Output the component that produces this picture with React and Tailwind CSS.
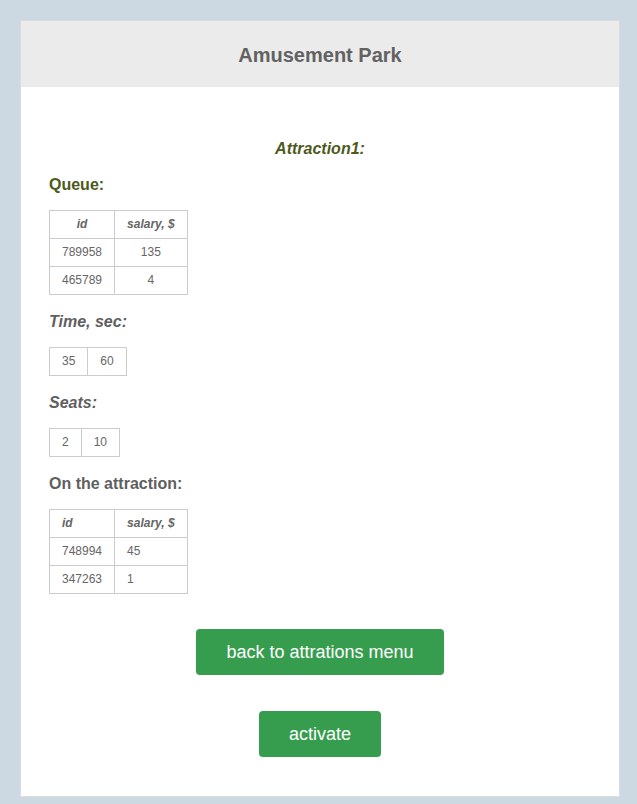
export default function App() {
  const font = { fontFamily: '"Liberation Sans", Arial, sans-serif' };
  const cell = "border border-[#cccccc] px-3 py-[6px] leading-[15px]";
  return (
    <div className="min-h-[804px] bg-[#cdd9e2] pt-[20px] pl-[20px] pb-[8px]" style={font}>
      <div className="w-[600px] border border-[#dcdcdc] bg-white">
        <div className="flex h-[66px] items-center justify-center bg-[#ebebeb] pt-[2px]">
          <h1 className="text-[20px] font-bold leading-[24px] text-[#626262]">Amusement Park</h1>
        </div>
        <div className="px-[28px] pt-[53px] pb-[39px]">
          <h3 className="text-center text-[16px] font-bold italic leading-[18px] text-[#4d5a1c]">Attraction1:</h3>
          <h3 className="mt-[18px] text-[16px] font-bold leading-[18px] text-[#4d5a1c]">Queue:</h3>
          <table className="mt-[16px] border-collapse text-[12px] text-[#666666]">
            <thead>
              <tr>
                <th className={cell + " text-center font-bold italic"}>id</th>
                <th className={cell + " text-center font-bold italic"}>salary, $</th>
              </tr>
            </thead>
            <tbody>
              <tr>
                <td className={cell + " text-center"}>789958</td>
                <td className={cell + " text-center"}>135</td>
              </tr>
              <tr>
                <td className={cell + " text-center"}>465789</td>
                <td className={cell + " text-center"}>4</td>
              </tr>
            </tbody>
          </table>
          <h3 className="mt-[18px] text-[16px] font-bold italic leading-[18px] text-[#5f5f5f]">Time, sec:</h3>
          <table className="mt-[16px] border-collapse text-[12px] text-[#666666]">
            <tbody>
              <tr>
                <td className={cell}>35</td>
                <td className={cell}>60</td>
              </tr>
            </tbody>
          </table>
          <h3 className="mt-[18px] text-[16px] font-bold italic leading-[18px] text-[#5f5f5f]">Seats:</h3>
          <table className="mt-[16px] border-collapse text-[12px] text-[#666666]">
            <tbody>
              <tr>
                <td className={cell}>2</td>
                <td className={cell}>10</td>
              </tr>
            </tbody>
          </table>
          <h3 className="mt-[18px] text-[16px] font-bold leading-[18px] text-[#5f5f5f]">On the attraction:</h3>
          <table className="mt-[16px] border-collapse text-left text-[12px] text-[#666666]">
            <thead>
              <tr>
                <th className={cell + " text-left font-bold italic"}>id</th>
                <th className={cell + " text-left font-bold italic"}>salary, $</th>
              </tr>
            </thead>
            <tbody>
              <tr>
                <td className={cell}>748994</td>
                <td className={cell}>45</td>
              </tr>
              <tr>
                <td className={cell}>347263</td>
                <td className={cell}>1</td>
              </tr>
            </tbody>
          </table>
          <div className="mt-[35px] flex flex-col items-center gap-[36px]">
            <button className="h-[46px] w-[248px] rounded-[4px] bg-[#369d4f] pt-[1px] text-[18px] text-white">back to attrations menu</button>
            <button className="h-[46px] w-[122px] rounded-[4px] bg-[#369d4f] text-[18px] text-white">activate</button>
          </div>
        </div>
      </div>
    </div>
  );
}
